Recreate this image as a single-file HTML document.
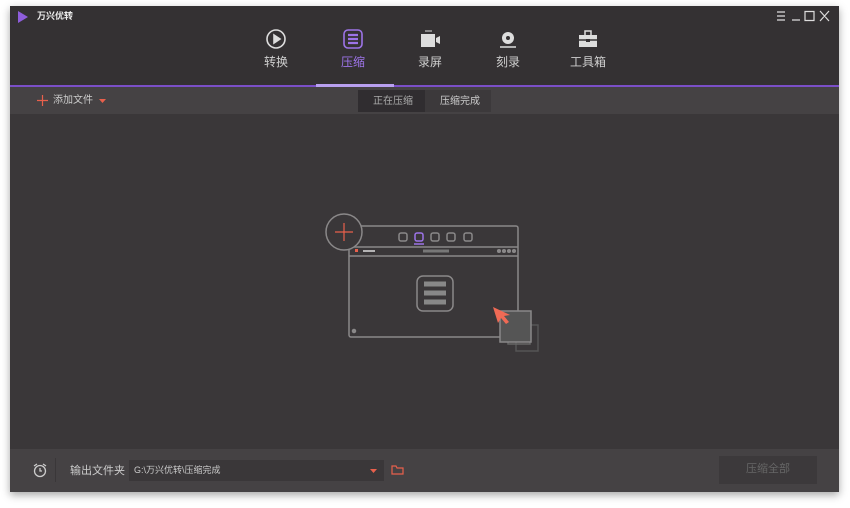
<!DOCTYPE html>
<html><head><meta charset="utf-8"><style>
body{margin:0;width:850px;height:508px;background:#fff;overflow:hidden;font-family:"Liberation Sans","Noto Sans CJK SC",sans-serif;position:relative}
.win{position:absolute;left:10px;top:6px;width:829px;height:486px;background:#3a3739;box-shadow:0 3px 8px rgba(0,0,0,.35)}
.hdr{position:absolute;left:0;top:0;width:100%;height:79px;background:#343133}
.pl{position:absolute;left:0;top:79px;width:100%;height:2px;background:#7b4fc8}
.ul{position:absolute;left:306px;top:78px;width:78px;height:3px;background:#b9a0f0}
.tb{position:absolute;left:0;top:81px;width:100%;height:27px;background:#454244}
.bot{position:absolute;left:0;top:443px;width:100%;height:43px;background:#454244}
.nav{position:absolute;top:22px;width:60px;text-align:center;color:#cfcfcf;font-size:12px;line-height:1}
.nav svg{display:block;margin:0 auto 6px}
.t{position:absolute;font-size:10px;color:#ccc;white-space:nowrap;line-height:1}
</style></head><body>
<div class="win">
<div class="hdr"></div>
<svg style="position:absolute;left:7px;top:5px" width="12" height="12"><path d="M1 0L11 6L1 12Z" fill="#8e5ddb"/></svg>
<div class="t" style="left:27px;top:6px;font-size:9px;font-weight:bold;color:#eee">万兴优转</div>
<svg style="position:absolute;left:765px;top:4px" width="60" height="12" stroke="#ddd" fill="none" stroke-width="1.2">
<path d="M2 2h8M2 6h8M2 10h8M17 10h8M30 1.5h9v9h-9zM45 1l9 10M54 1l-9 10"/></svg>
<div class="nav" style="left:236px"><svg width="22" height="22" fill="none" stroke="#ddd" stroke-width="1.6"><circle cx="11" cy="11" r="9"/><path d="M9 7l6 4-6 4z" fill="#ddd"/></svg>转换</div>
<div class="nav" style="left:313px;color:#9d74e8"><svg width="22" height="22" fill="none" stroke="#9d74e8" stroke-width="1.6"><rect x="2" y="2" width="18" height="18" rx="4"/><path d="M6 7h10M6 11h10M6 15h10" stroke-width="2.2"/></svg>压缩</div>
<div class="nav" style="left:390px"><svg width="22" height="22"><rect x="2" y="6" width="14" height="13" fill="#ddd"/><path d="M17 10l4-2v8l-4-2z" fill="#ddd"/><path d="M6 3h7" stroke="#ddd"/></svg>录屏</div>
<div class="nav" style="left:468px"><svg width="22" height="22"><circle cx="11" cy="10" r="6" fill="#ddd"/><circle cx="11" cy="10" r="2" fill="#343133"/><path d="M3 19h16" stroke="#ddd" stroke-width="1.5"/></svg>刻录</div>
<div class="nav" style="left:548px"><svg width="22" height="22"><rect x="2" y="7" width="18" height="12" fill="#ddd"/><path d="M8 7V3h6v4" stroke="#ddd" fill="none" stroke-width="1.5"/><path d="M2 12h18" stroke="#343133" stroke-width="1.5"/><rect x="9" y="11" width="4" height="3" fill="#343133"/></svg>工具箱</div>
<div class="pl"></div><div class="ul"></div>
<div class="tb"></div>
<svg style="position:absolute;left:27px;top:89px" width="11" height="11" stroke="#e8604c" stroke-width="1.2"><path d="M0 5.5h11M5.5 0v11"/></svg>
<div class="t" style="left:43px;top:90px">添加文件</div>
<svg style="position:absolute;left:89px;top:93px" width="8" height="5"><path d="M0 0h7L3.5 4z" fill="#e8604c"/></svg>
<div style="position:absolute;left:348px;top:84px;width:67px;height:22px;background:#302d30"></div>
<div style="position:absolute;left:415px;top:84px;width:66px;height:22px;background:#3c393b"></div>
<div class="t" style="left:363px;top:91px;color:#aaa">正在压缩</div>
<div class="t" style="left:430px;top:91px;color:#ccc">压缩完成</div>
<svg style="position:absolute;left:290px;top:194px" width="250" height="160" fill="none" stroke="#8a8889" stroke-width="1.5">
<rect x="49" y="26" width="169" height="111" rx="2"/>
<path d="M49 47h169M49 56h169"/>
<rect x="99" y="33" width="8" height="8" rx="2"/><rect x="115" y="33" width="8" height="8" rx="2" stroke="#9d74e8"/><path d="M114 44h10" stroke="#9d74e8"/>
<rect x="131" y="33" width="8" height="8" rx="2"/><rect x="147" y="33" width="8" height="8" rx="2"/><rect x="164" y="33" width="8" height="8" rx="2"/>
<rect x="55" y="49" width="3" height="3" fill="#e8604c" stroke="none"/><path d="M63 51h12" stroke="#ddd"/>
<path d="M123 51h26" stroke="#777" stroke-width="3"/>
<circle cx="199" cy="51" r="1.3" fill="#888"/><circle cx="204" cy="51" r="1.3" fill="#888"/><circle cx="209" cy="51" r="1.3" fill="#888"/><circle cx="214" cy="51" r="1.3" fill="#888"/>
<rect x="117" y="76" width="36" height="35" rx="6"/>
<path d="M124 84h22M124 93h22M124 102h22" stroke="#888" stroke-width="5"/>
<circle cx="54" cy="131" r="1.5" fill="#888"/>
<circle cx="44" cy="32" r="18" fill="#3a3739"/>
<path d="M35 32h18M44 23v18" stroke="#e8604c" stroke-width="1.2"/>
<rect x="216" y="125" width="22" height="26" stroke="#555"/><rect x="208" y="118" width="22" height="26" stroke="#666"/>
<rect x="200" y="111" width="31" height="31" fill="#555" stroke="#8a8889"/>
<path d="M193 107l5 16 3-5 5 6 3-2-5-6 6-1z" fill="#f06a55" stroke="none"/>
</svg>
<div class="bot"></div>
<svg style="position:absolute;left:22px;top:456px" width="16" height="16" fill="none" stroke="#ccc" stroke-width="1.3"><circle cx="8" cy="9" r="5.5"/><path d="M8 6v3h2M2 4l3-2M14 4l-3-2"/></svg>
<div style="position:absolute;left:45px;top:452px;width:1px;height:24px;background:#3a3739"></div>
<div class="t" style="left:60px;top:460px;font-size:11px">输出文件夹</div>
<div style="position:absolute;left:119px;top:454px;width:255px;height:21px;background:#3a3739"></div>
<div class="t" style="left:124px;top:460px;font-size:9px">G:\万兴优转\压缩完成</div>
<svg style="position:absolute;left:360px;top:463px" width="8" height="5"><path d="M0 0h7L3.5 4z" fill="#e8604c"/></svg>
<svg style="position:absolute;left:381px;top:458px" width="14" height="12" fill="none" stroke="#e8604c" stroke-width="1.2"><path d="M1 2h4l1 2h6v6H1z"/></svg>
<div style="position:absolute;left:709px;top:450px;width:98px;height:28px;background:#3c393b"></div>
<div class="t" style="left:736px;top:458px;font-size:11px;color:#666">压缩全部</div>
</div>
</body></html>
